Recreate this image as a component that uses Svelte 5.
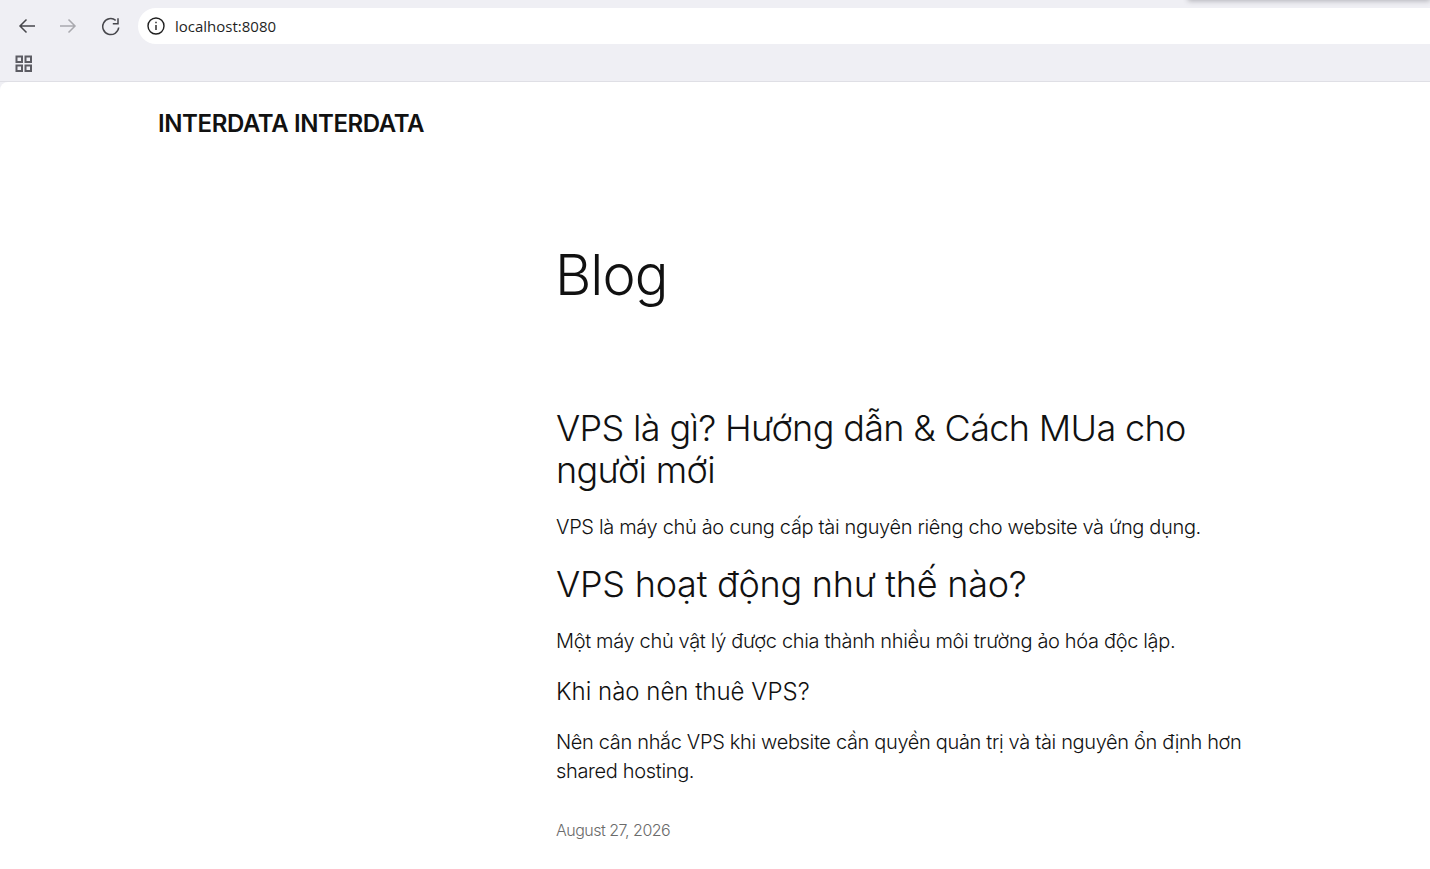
<script>
	const navIcons = [
		{ name: 'back', d: 'M18 10H3.5M9.5 3.5 3 10l6.5 6.5', color: '#47474c' },
		{ name: 'forward', d: 'M2 10h14.500M10.500 3.500 17 10l-6.500 6.500', color: '#a9a9ae' }
	];
</script>

<div class="window">
	<header class="chrome">
		<div class="popup-shadow"></div>
		<div class="toolbar">
			{#each navIcons as icon}
				<button class="nav-btn" aria-label={icon.name}>
					<svg width="20" height="20" viewBox="0 0 20 20" fill="none" stroke={icon.color} stroke-width="1.500">
						<path d={icon.d} />
					</svg>
				</button>
			{/each}
			<button class="nav-btn" aria-label="reload">
				<svg width="20" height="20" viewBox="0 0 20 20" fill="none" stroke="#47474c" stroke-width="1.500">
					<path d="M18.700 11.500A8 8 0 1 1 15.700 4.300" />
					<path d="M18 2.200V7.800H12.800" />
				</svg>
			</button>
			<div class="address">
				<svg width="20" height="20" viewBox="0 0 20 20" fill="none" stroke="#1f1f1f" stroke-width="1.400">
					<circle cx="10" cy="10" r="8" />
					<path d="M10 9v5" />
					<path d="M10 5.800v1.500" />
				</svg>
				<span class="url">localhost:8080</span>
			</div>
		</div>
		<div class="bookmarks">
			<svg width="18" height="18" viewBox="0 0 18 18" fill="none" stroke="#5c5c63" stroke-width="2">
				<rect x="1.500" y="1.500" width="5.500" height="5.500" />
				<rect x="10.500" y="1.500" width="5.500" height="5.500" />
				<rect x="1.500" y="10.500" width="5.500" height="5.500" />
				<rect x="10.500" y="10.500" width="5.500" height="5.500" />
			</svg>
		</div>
	</header>

	<main class="page">
		<p class="site-title">INTERDATA INTERDATA</p>
		<div class="content">
			<h1>Blog</h1>
			<article>
				<h2 class="post-title">VPS là gì? Hướng dẫn &amp; Cách MUa cho người mới</h2>
				<p>VPS là máy chủ ảo cung cấp tài nguyên riêng cho website và ứng dụng.</p>
				<h2 class="section">VPS hoạt động như thế nào?</h2>
				<p>Một máy chủ vật lý được chia thành nhiều môi trường ảo hóa độc lập.</p>
				<h3>Khi nào nên thuê VPS?</h3>
				<p>Nên cân nhắc VPS khi website cần quyền quản trị và tài nguyên ổn định hơn shared hosting.</p>
				<p class="date">August 27, 2026</p>
			</article>
		</div>
	</main>
</div>

<style>
	:global(body) {
		margin: 0;
		background: #efeff4;
		overflow: hidden;
	}

	.window {
		height: 869px;
		display: flex;
		flex-direction: column;
		font-family: Inter, 'Noto Sans', sans-serif;
		color: #111;
	}

	.chrome {
		position: relative;
		height: 81px;
		flex: none;
		background: #efeff4;
		border-bottom: 1px solid #dfdfe5;
	}

	.popup-shadow {
		position: absolute;
		top: -6px;
		left: 1188px;
		right: 0;
		height: 6px;
		box-shadow: 0 1px 5px rgba(60, 60, 70, 0.35);
	}

	.toolbar {
		display: flex;
		align-items: center;
		height: 36px;
		padding: 8px 0 0 6px;
	}

	.nav-btn {
		width: 41.500px;
		height: 36px;
		padding: 0;
		border: 0;
		background: none;
		display: flex;
		align-items: center;
		justify-content: center;
	}

	.address {
		flex: 1;
		height: 36px;
		margin-left: 7.500px;
		padding-left: 8px;
		background: #fff;
		border-radius: 18px 0 0 18px;
		display: flex;
		align-items: center;
		gap: 9px;
	}

	.url {
		font: 15px 'Open Sans', sans-serif;
		color: #1f1f1f;
	}

	.bookmarks {
		height: 35px;
		padding: 2px 0 0 15px;
		display: flex;
		align-items: center;
	}

	.page {
		flex: 1;
		background: #fff;
		border-top-left-radius: 8px;
		position: relative;
		padding: 0 158px;
	}

	.site-title {
		margin: 0;
		padding-top: 25px;
		font-size: 24px;
		line-height: 34px;
		font-weight: 600;
		letter-spacing: -0.4px;
	}

	.content {
		width: 690px;
		margin-left: 398px;
	}

	h1 {
		margin: 99px 0 0;
		margin-left: -1px;
		font-size: 56px;
		line-height: 70px;
		font-weight: 300;
		letter-spacing: -1px;
	}

	article {
		margin-top: 97px;
	}

	h2 {
		margin: 0;
		font-size: 36px;
		line-height: 42px;
		font-weight: 300;
	}

	.post-title {
		letter-spacing: -0.65px;
	}

	h3 {
		margin: 21px 0 0;
		font-size: 24px;
		line-height: 29px;
		font-weight: 300;
		letter-spacing: 0;
	}

	p {
		margin: 22px 0 0;
		font-size: 20px;
		line-height: 29px;
		font-weight: 300;
		letter-spacing: -0.34px;
	}

	.section {
		margin-top: 21px;
		letter-spacing: -0.25px;
	}

	.date {
		margin-top: 32px;
		font-size: 16px;
		line-height: 24px;
		color: #6b6b6b;
		letter-spacing: -0.5px;
	}
</style>
